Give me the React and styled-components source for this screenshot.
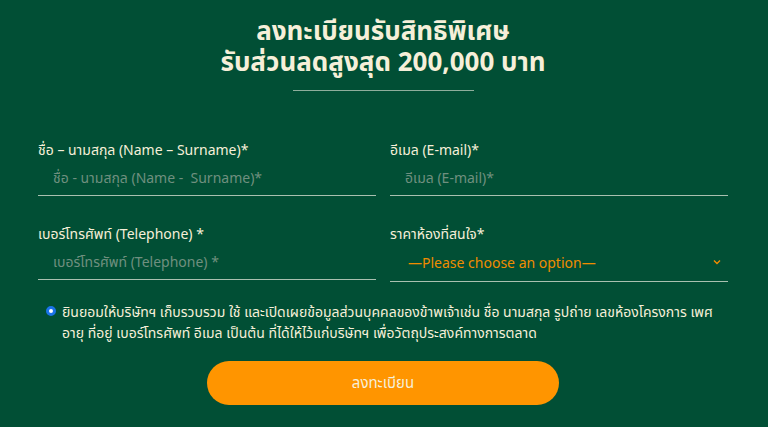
import React from 'react';
import styled, { createGlobalStyle } from 'styled-components';

const GlobalStyle = createGlobalStyle`
  * { box-sizing: border-box; }
  body {
    margin: 0;
    background: #014f35;
    font-family: "Noto Sans", "Noto Sans Thai", "DejaVu Sans", sans-serif;
  }
`;

const Page = styled.div`
  width: 768px;
  height: 427px;
  background: #014f35;
  padding: 15px 40px 0 38px;
  overflow: hidden;
`;

const Title = styled.h1`
  margin: 0;
  text-align: center;
  color: #f6efd9;
  font-size: 26px;
  font-weight: 700;
  line-height: 31px;
`;

const Divider = styled.hr`
  width: 181px;
  margin: 13px auto 0;
  border: 0;
  border-top: 1px solid #8fae9c;
`;

const Grid = styled.div`
  display: grid;
  grid-template-columns: 338px 338px;
  column-gap: 14px;
  row-gap: 28px;
  margin-top: 49px;
`;

const Field = styled.label`
  display: flex;
  flex-direction: column;
`;

const Label = styled.span`
  color: #f6efd9;
  font-size: 14px;
  line-height: 20px;
`;

const Input = styled.input`
  margin-top: 6px;
  height: 30px;
  border: 0;
  border-bottom: 1px solid #a9c0b0;
  background: transparent;
  padding: 0 0 7px 15px;
  font: inherit;
  font-size: 14px;
  color: #f6efd9;
  outline: none;
  &::placeholder { color: #6f8f7f; }
`;

const SelectBox = styled.div`
  margin-top: 6px;
  height: 32px;
  display: flex;
  align-items: center;
  justify-content: space-between;
  border-bottom: 1px solid #a9c0b0;
  padding: 0 6px 7px 18px;
  color: #f08c00;
  font-size: 14px;
`;

const Consent = styled.div`
  display: flex;
  align-items: flex-start;
  gap: 6px;
  margin-top: 19px;
  padding-left: 8px;
  color: #f6efd9;
  font-size: 14px;
  line-height: 21px;
`;

const Radio = styled.span`
  flex: none;
  width: 10px;
  height: 10px;
  margin-top: 5px;
  border-radius: 50%;
  background: #fff;
  border: 3px solid #1a73e8;
`;

const Submit = styled.button`
  display: block;
  width: 352px;
  height: 44px;
  margin: 18px 0 0 169px;
  border: 0;
  border-radius: 22px;
  background: #ff9500;
  color: #f6efd9;
  font: inherit;
  font-size: 15px;
`;

export default function App() {
  return (
    <Page>
      <GlobalStyle />
      <Title>
        ลงทะเบียนรับสิทธิพิเศษ<br />รับส่วนลดสูงสุด 200,000 บาท
      </Title>
      <Divider />
      <Grid>
        <Field>
          <Label>ชื่อ – นามสกุล (Name – Surname)*</Label>
          <Input placeholder="ชื่อ - นามสกุล (Name -  Surname)*" />
        </Field>
        <Field>
          <Label>อีเมล (E-mail)*</Label>
          <Input placeholder="อีเมล (E-mail)*" />
        </Field>
        <Field>
          <Label>เบอร์โทรศัพท์ (Telephone) *</Label>
          <Input placeholder="เบอร์โทรศัพท์ (Telephone) *" />
        </Field>
        <Field>
          <Label>ราคาห้องที่สนใจ*</Label>
          <SelectBox>
            <span>—Please choose an option—</span>
            <svg width="10" height="10" viewBox="0 0 10 10">
              <path d="M2 3.5 L5 6.5 L8 3.5" fill="none" stroke="#f08c00" strokeWidth="1.4" />
            </svg>
          </SelectBox>
        </Field>
      </Grid>
      <Consent>
        <Radio />
        <span>
          ยินยอมให้บริษัทฯ เก็บรวบรวม ใช้ และเปิดเผยข้อมูลส่วนบุคคลของข้าพเจ้าเช่น ชื่อ นามสกุล รูปถ่าย เลขห้องโครงการ เพศ อายุ ที่อยู่ เบอร์โทรศัพท์ อีเมล เป็นต้น ที่ได้ให้ไว้แก่บริษัทฯ เพื่อวัตถุประสงค์ทางการตลาด
        </span>
      </Consent>
      <Submit>ลงทะเบียน</Submit>
    </Page>
  );
}
